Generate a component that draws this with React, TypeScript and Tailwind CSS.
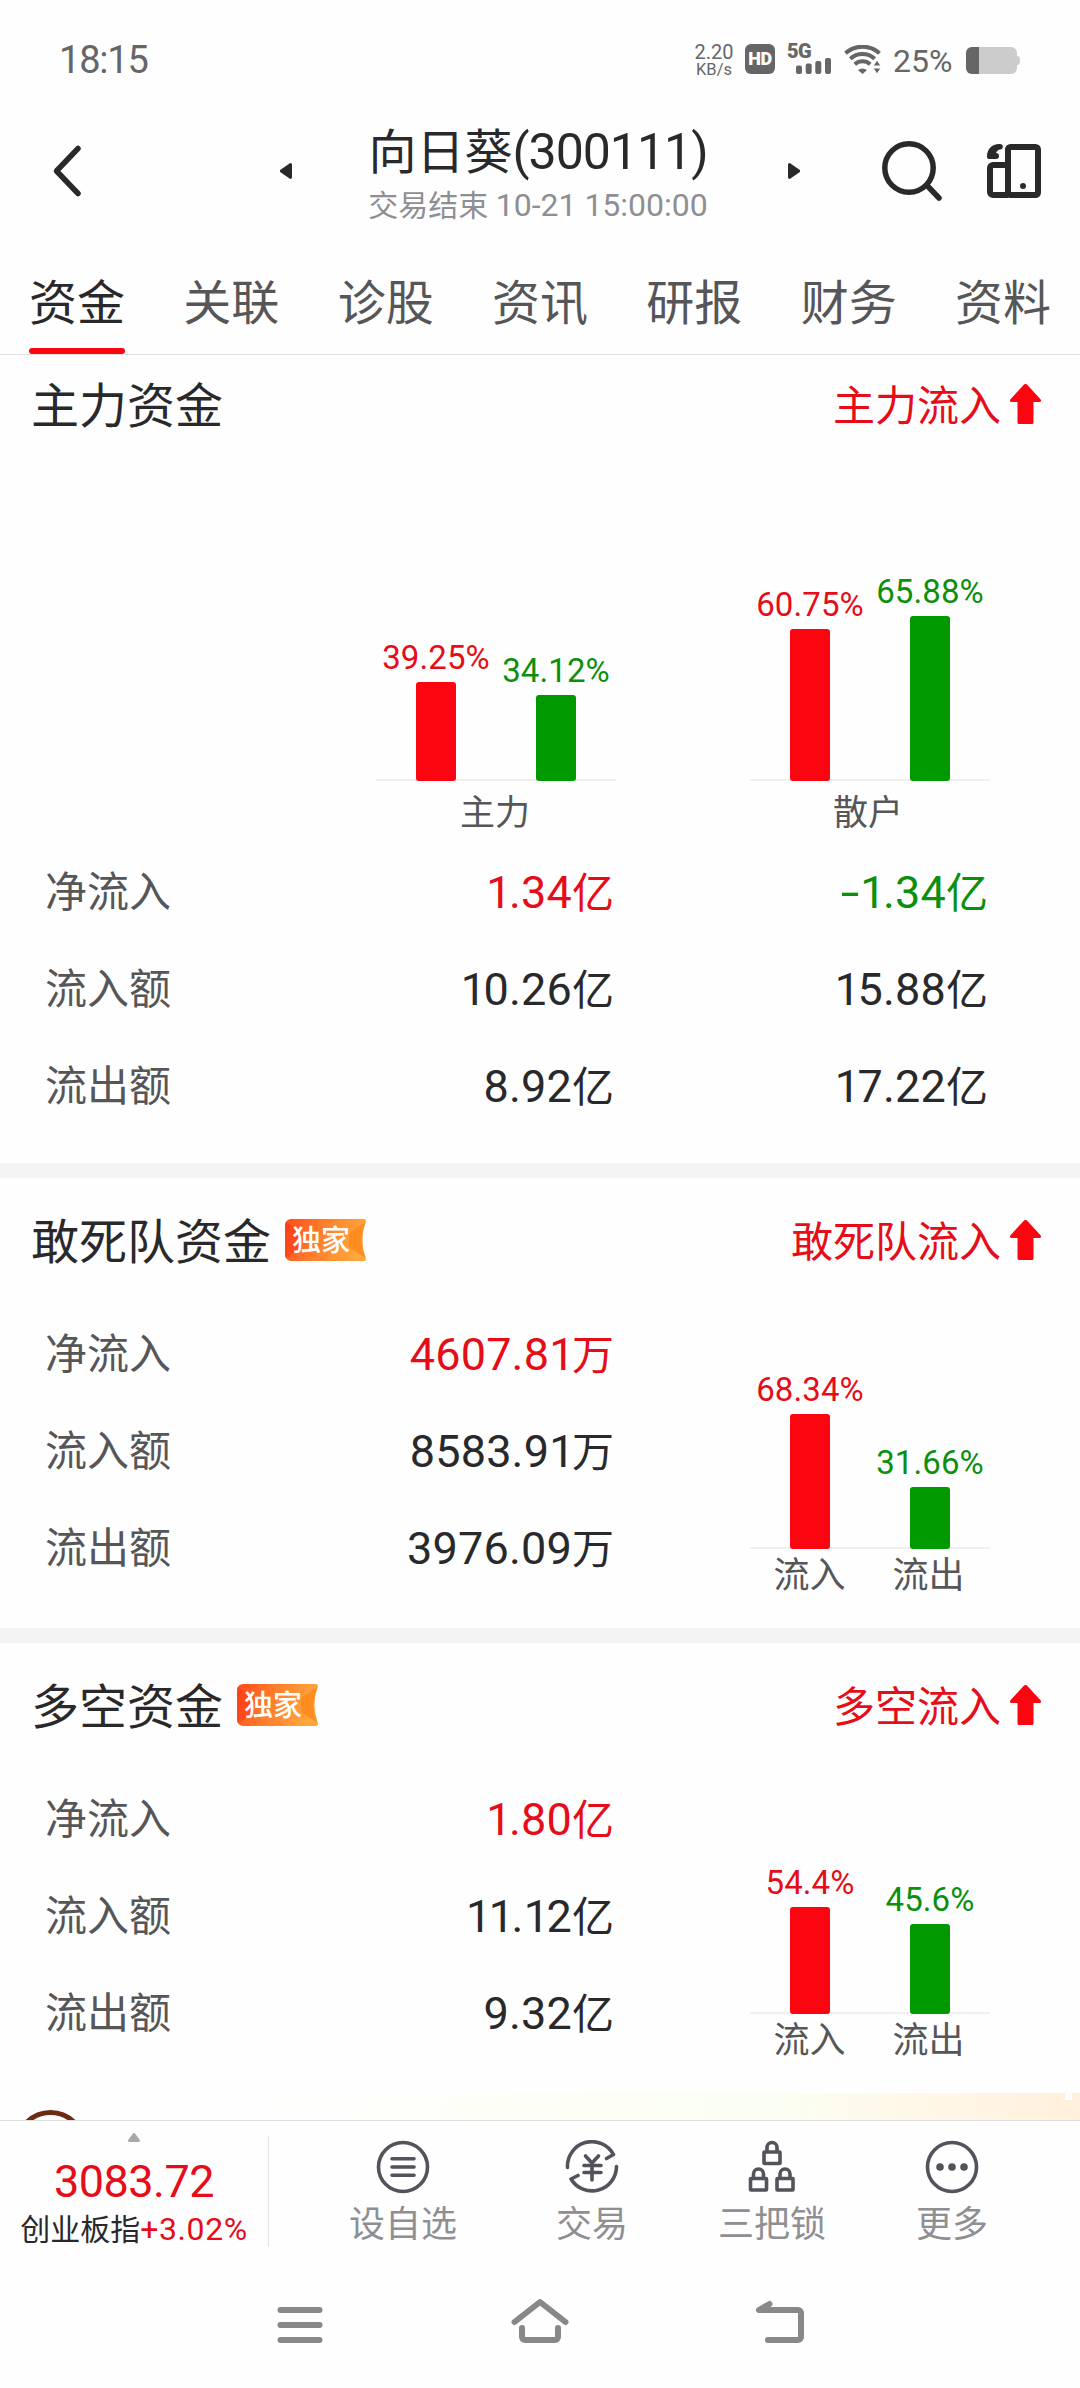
import { Fragment, type ReactNode } from "react"

const RED = "#e60c18"
const GREEN = "#0c900c"

interface BarData {
  pct: number
  text: string
  up: boolean
  label?: string
}

const tabs = ["资金", "关联", "诊股", "资讯", "研报", "财务", "资料"]

function StatusBar() {
  return (
    <div className="flex h-[110px] items-start pl-[59px] pr-[60px] text-[#666]">
      <span className="mt-[39px] text-[38px] leading-[42px] tracking-[-1.2px]">18:15</span>
      <div className="ml-auto flex items-start">
        <div className="mt-[43px] flex w-[38px] flex-col items-center whitespace-nowrap">
          <span className="text-[20px] leading-[18px]">2.20</span>
          <span className="mt-px text-[16.5px] leading-[16px]">KB/s</span>
        </div>
        <div className="ml-[12px] mt-[44px] flex h-[30px] w-[30px] items-center justify-center rounded-[6px] bg-[#666] text-[18px] font-black leading-none tracking-[-0.5px] text-white">
          HD
        </div>
        <div className="relative ml-[12px] mt-[44px] h-[30px] w-[44px]">
          <span className="absolute left-0 top-[-3px] text-[20px] font-black leading-[20px] tracking-[-0.5px]">5G</span>
          <svg width="44" height="30" viewBox="0 0 44 30" fill="#666">
            <rect x="9" y="21.5" width="6" height="8.5" rx="2" />
            <rect x="18.7" y="19.5" width="6" height="10.5" rx="2" />
            <rect x="28.3" y="17" width="6" height="13" rx="2" />
            <rect x="38" y="14" width="6" height="16" rx="2" />
          </svg>
        </div>
        <svg className="ml-[13px] mt-[45px]" width="37" height="29" viewBox="0 0 37 29" fill="none" stroke="#666">
          <path d="M1.500 8.300a25 25 0 0 1 34 0" strokeWidth="4" />
          <path d="M6.300 13.800a18 18 0 0 1 24.400 0" strokeWidth="4" />
          <path d="M10.800 19.200a11.500 11.500 0 0 1 15.400 0" strokeWidth="4" />
          <path d="M14 25q4.500-3 9 0l-4.500 4z" fill="#666" stroke="none" />
          <path d="M33 15l4 6h-8zM33 29l-4-6h8z" fill="#666" stroke="#fefefe" strokeWidth="1" />
        </svg>
        <span className="ml-[12px] mt-[44px] w-[66px] whitespace-nowrap text-[32px] leading-[34px]">25%</span>
        <svg className="ml-[7px] mt-[47px]" width="54" height="27" viewBox="0 0 54 27">
          <rect width="51" height="27" rx="6" fill="#ccc" />
          <path d="M50 9h1.500a2.500 4.500 0 0 1 0 9H50z" fill="#ccc" />
          <path d="M6 0h7v27H6a6 6 0 0 1-6-6V6a6 6 0 0 1 6-6z" fill="#666" />
        </svg>
      </div>
    </div>
  )
}

function Header() {
  return (
    <div className="flex h-[140px] items-start text-[#29292b]">
      <svg className="ml-[52px] mt-[34px]" width="32" height="54" viewBox="0 0 32 54" fill="none" stroke="currentColor" strokeWidth="5.500" strokeLinecap="round" strokeLinejoin="round">
        <path d="M26 4.500L4.500 27 26 49.500" />
      </svg>
      <svg className="ml-[196px] mt-[53px]" width="12" height="16" viewBox="0 0 12 16" fill="currentColor">
        <path d="M12 1.500v13a1.500 1.500 0 0 1-2.500 1L.5 9.200a1.500 1.500 0 0 1 0-2.400L9.500.5A1.500 1.500 0 0 1 12 1.500z" />
      </svg>
      <div className="flex w-[496px] flex-col items-center whitespace-nowrap pr-[4px]">
        <div className="mt-[12px] text-[48px] leading-[60px]">
          向日葵<span className="text-[50px] tracking-[-1px]">(300111)</span>
        </div>
        <div className="mt-[2px] text-[30px] leading-[40px] text-[#8f8f93]">
          交易结束 <span className="text-[32px]">10-21 15:00:00</span>
        </div>
      </div>
      <svg className="mt-[53px]" width="12" height="16" viewBox="0 0 12 16" fill="currentColor">
        <path d="M0 1.500v13a1.500 1.500 0 0 0 2.500 1l9-6.300a1.500 1.500 0 0 0 0-2.400L2.500.5A1.500 1.500 0 0 0 0 1.500z" />
      </svg>
      <svg className="ml-[80px] mt-[29px]" width="64" height="64" viewBox="0 0 64 64" fill="none" stroke="currentColor" strokeWidth="5.500" strokeLinecap="round">
        <circle cx="29" cy="29" r="24.200" />
        <path d="M47.500 47l11.500 12" />
      </svg>
      <svg className="ml-[43px] mt-[34px]" width="54" height="54" viewBox="0 0 54 54" fill="none" stroke="currentColor" strokeWidth="6">
        <rect x="21" y="3" width="30" height="48" rx="2.500" />
        <path d="M21 21H6a3 3 0 0 0-3 3v24a3 3 0 0 0 3 3h15" />
        <circle cx="36" cy="42" r="3" fill="currentColor" stroke="none" />
        <path d="M12 0h1a2.500 2.500 0 0 1 0 5.500C10.500 6 9.500 7.500 9 9a3 3 0 0 1 0 6H2a2 2 0 0 1-2-2.500C0 5 5 0 12 0z" fill="currentColor" stroke="none" />
      </svg>
    </div>
  )
}

function Tabs() {
  return (
    <div className="flex h-[105px] justify-between border-b border-[#e2e2e2] px-[29px] text-[48px] leading-[107px] text-[#565658]">
      {tabs.map((tab, i) => (
        <div key={tab} className={i === 0 ? "flex flex-col text-[#29292b]" : "flex flex-col"}>
          <span className="h-[98px]">{tab}</span>
          {i === 0 && <i className="h-[6px] rounded-full bg-[#fb0511]" />}
        </div>
      ))}
    </div>
  )
}

function Exclusive() {
  return (
    <div className="relative ml-[14px] mt-[-3px] h-[42px] w-[81px]">
      <svg className="absolute inset-0" width="81" height="42" viewBox="0 0 81 42">
        <defs>
          <linearGradient id="tag" x1="0" y1="0" x2="1" y2="0.200">
            <stop offset="0" stopColor="#ff4a1c" />
            <stop offset="0.500" stopColor="#ff7f2c" />
            <stop offset="1" stopColor="#ffa63c" />
          </linearGradient>
        </defs>
        <path d="M6 0h73q2.500 0 1.800 3Q74 21 80.800 39q.7 3-1.800 3H6a6 6 0 0 1-6-6V6a6 6 0 0 1 6-6z" fill="url(#tag)" />
        <path d="M80.500 3L64 14v14l16.500 11Q72.500 21 80.500 3z" fill="#ff8c20" />
        <path d="M1 3l15 10v16L1 39q-1-1-1-3V6q0-2 1-3z" fill="#ff3c14" opacity="0.600" />
      </svg>
      <span className="relative block pl-[7px] pt-px text-[29px] font-medium leading-[43px] text-white">独家</span>
    </div>
  )
}

function TitleRow({ title, flow, tag, first }: { title: string; flow: string; tag?: boolean; first?: boolean }) {
  return (
    <div className={first ? "flex h-[100px] items-center pl-[31px] pr-[39px]" : "flex h-[127px] items-center pl-[31px] pr-[39px]"}>
      <h2 className="pt-[3px] text-[48px] leading-[60px] text-[#29292b]">{title}</h2>
      {tag && <Exclusive />}
      <span className="ml-auto pt-[3px] text-[42px] leading-[60px] text-[#e60c18]">{flow}</span>
      <svg className="ml-[9px] mt-[-3px]" width="31" height="40" viewBox="0 0 31 40" fill="#fb0511">
        <path d="M13.800.8a2.400 2.400 0 0 1 3.400 0l13.300 14.400q1.500 2.300-1.200 2.800H23.500v20.500q0 1.500-1.500 1.500H9q-1.500 0-1.500-1.500V18H1.700q-2.700-.5-1.200-2.800z" />
      </svg>
    </div>
  )
}

// tightens the "1" and widens the minus sign
function Digits({ value }: { value: string }) {
  return (
    <span className="text-[45px] tracking-[0.2px]">
      {value.split(/([1-])/).map((part, i) => {
        if (part === "-") return <span key={i} className="mr-px inline-block origin-right scale-x-150">-</span>
        if (part === "1") return <span key={i} className="tracking-[-2.500px]">1</span>
        return part
      })}
    </span>
  )
}

function Amount({ value, color }: { value: string; color?: string }) {
  return (
    <span
      className="h-[97px] whitespace-nowrap pr-px text-right text-[42px] leading-[97px]"
      style={{ color: color ?? "#29292b" }}
    >
      <Digits value={value.slice(0, -1)} />
      {value.slice(-1)}
    </span>
  )
}

function Bars({ data, scale }: { data: BarData[]; scale: number }) {
  return (
    <div className="flex w-[240px] items-end justify-around bg-[linear-gradient(#f0f0f0,#f0f0f0)] bg-[length:100%_2px] bg-bottom bg-no-repeat">
      {data.map((bar) => (
        <div key={bar.text} className="flex w-[120px] flex-col items-center">
          <span className="mb-[7px] text-[33px] leading-[34px] tracking-[0.1px]" style={{ color: bar.up ? RED : GREEN }}>
            {bar.text}
          </span>
          <div
            className="w-[40px] rounded-[3px]"
            style={{ height: bar.pct * scale, backgroundColor: bar.up ? "#fb0511" : "#009900" }}
          />
        </div>
      ))}
    </div>
  )
}

function FlowSection({ title, flow, amounts, bars }: { title: string; flow: string; amounts: string[]; bars: BarData[] }) {
  const labels = ["净流入", "流入额", "流出额"]
  return (
    <section>
      <TitleRow title={title} flow={flow} tag />
      <div className="flex h-[323px] pl-[45px]">
        <div className="w-[570px] pt-px">
          {labels.map((label, i) => (
            <div key={label} className="flex h-[97px] justify-between text-[42px] leading-[97px] text-[#565658]">
              <span>{label}</span>
              <Amount value={amounts[i]} color={i === 0 ? RED : undefined} />
            </div>
          ))}
        </div>
        <div className="ml-[135px] w-[240px]">
          <div className="flex h-[244px] items-stretch">
            <Bars data={bars} scale={1.97} />
          </div>
          <div className="flex pt-[2px] text-[36px] leading-[50px] text-[#565658]">
            {bars.map((bar) => (
              <span key={bar.label} className="w-[119px] text-center">{bar.label}</span>
            ))}
          </div>
        </div>
      </div>
    </section>
  )
}

function MainSection() {
  const rows = [
    ["净流入", "1.34亿", "-1.34亿"],
    ["流入额", "10.26亿", "15.88亿"],
    ["流出额", "8.92亿", "17.22亿"],
  ]
  return (
    <section className="h-[808px]">
      <TitleRow title="主力资金" flow="主力流入" first />
      <div className="flex h-[326px] gap-[134px] pl-[376px]">
        <Bars scale={2.51} data={[{ pct: 39.25, text: "39.25%", up: true }, { pct: 34.12, text: "34.12%", up: false }]} />
        <Bars scale={2.51} data={[{ pct: 60.75, text: "60.75%", up: true }, { pct: 65.88, text: "65.88%", up: false }]} />
      </div>
      <div className="flex h-[62px] gap-[134px] pl-[376px] text-center text-[35px] leading-[66px] text-[#565658]">
        <span className="w-[238px]">主力</span>
        <span className="w-[240px]">散户</span>
      </div>
      <div className="grid grid-cols-[330px_240px_374px] pl-[45px] pt-px text-[42px] leading-[97px] text-[#565658]">
        {rows.map(([label, main, retail], i) => (
          <Fragment key={label}>
            <span className="h-[97px]">{label}</span>
            <Amount value={main} color={i === 0 ? RED : undefined} />
            <Amount value={retail} color={i === 0 ? GREEN : undefined} />
          </Fragment>
        ))}
      </div>
    </section>
  )
}

function Action({ label, className, children }: { label: string; className: string; children: ReactNode }) {
  return (
    <div className={className}>
      <svg className="mt-[19px]" width="54" height="54" viewBox="0 0 54 54" fill="none" stroke="#52535b" strokeWidth="3.600" strokeLinecap="round" strokeLinejoin="round">
        {children}
      </svg>
      <span className="mt-[6px] text-[36px] leading-[50px] text-[#8f8f93]">{label}</span>
    </div>
  )
}

function Lock({ x, y }: { x: number; y: number }) {
  return (
    <g transform={`translate(${x} ${y})`}>
      <rect x="2" y="11.500" width="16" height="11.500" rx="0.500" />
      <path d="M5 11V7a5 5 0 0 1 10 0v4" />
    </g>
  )
}

function BottomBar() {
  return (
    <div className="flex h-[140px] border-t border-[#dedede]">
      <div className="flex w-[268px] flex-col items-center pt-[12px]">
        <svg width="12" height="9" viewBox="0 0 12 9" fill="#a9a9ab">
          <path d="M4.800.8q1.200-1.500 2.400 0l4.500 6q.9 2.200-1.200 2.200h-9q-2.100 0-1.200-2.200z" />
        </svg>
        <span className="mt-[14px] text-[45px] leading-[52px] tracking-[-0.5px] text-[#e60c18]">3083.72</span>
        <span className="mt-px whitespace-nowrap text-[30px] leading-[40px] text-[#29292b]">
          创业板指<span className="text-[32px] tracking-[0.6px] text-[#e60c18]">+3.02%</span>
        </span>
      </div>
      <div className="mt-[15px] h-[111px] w-px bg-[#e2e2e2]" />
      <Action label="设自选" className="ml-[60px] flex w-[148px] flex-col items-center">
        <circle cx="27" cy="27" r="24.500" />
        <path d="M16 18.700h22M16 27h22M16 35.200h22" />
      </Action>
      <Action label="交易" className="ml-[51px] flex w-[128px] flex-col items-center">
        <path d="M2.500 27.500A24.500 24.500 0 0 1 48.500 14.500L41.500 18.500" />
        <path d="M51.500 26.500A24.500 24.500 0 0 1 6 39L13 35.500" />
        <path d="M20.500 16L27 23l6.500-7M27 23v17M19 25.500h17M19 32.500h17" />
      </Action>
      <Action label="三把锁" className="ml-[42px] flex w-[148px] flex-col items-center">
        <Lock x={17} y={0.5} />
        <Lock x={3.5} y={27} />
        <Lock x={30} y={27} />
      </Action>
      <Action label="更多" className="ml-[42px] flex w-[128px] flex-col items-center">
        <circle cx="27" cy="27" r="24.500" />
        <g fill="#52535b" stroke="none">
          <circle cx="15" cy="27" r="3.800" />
          <circle cx="27" cy="27" r="3.800" />
          <circle cx="39" cy="27" r="3.800" />
        </g>
      </Action>
    </div>
  )
}

function NavBar() {
  return (
    <div className="flex h-[128px] items-start pt-[34px]">
      <svg className="ml-[270px]" width="60" height="60" viewBox="0 0 60 60" fill="none" stroke="#888" strokeWidth="6" strokeLinecap="round">
        <path d="M10.500 16h39M10.500 31h39M10.500 46h39" />
      </svg>
      <svg className="ml-[180px]" width="60" height="60" viewBox="0 0 60 60" fill="none" stroke="#888" strokeWidth="6" strokeLinecap="round" strokeLinejoin="round">
        <path d="M4.500 28L30 8l25.500 20" />
        <path d="M12 34v9a3 3 0 0 0 3 3h30a3 3 0 0 0 3-3v-9" />
      </svg>
      <svg className="ml-[180px]" width="60" height="60" viewBox="0 0 60 60" fill="none" stroke="#888" strokeWidth="6" strokeLinecap="round" strokeLinejoin="round">
        <path d="M19.500 10L9 16h39a3 3 0 0 1 3 3v24a3 3 0 0 1-3 3H18" />
      </svg>
    </div>
  )
}

export default function App() {
  return (
    <div className="h-[2388px] w-[1080px] overflow-hidden bg-[#fefefe] font-['Roboto','Noto_Sans_CJK_SC',sans-serif]">
      <StatusBar />
      <Header />
      <Tabs />
      <MainSection />
      <div className="h-[15px] bg-[#f4f4f4]" />
      <FlowSection
        title="敢死队资金"
        flow="敢死队流入"
        amounts={["4607.81万", "8583.91万", "3976.09万"]}
        bars={[
          { pct: 68.34, text: "68.34%", up: true, label: "流入" },
          { pct: 31.66, text: "31.66%", up: false, label: "流出" },
        ]}
      />
      <div className="h-[15px] bg-[#f4f4f4]" />
      <FlowSection
        title="多空资金"
        flow="多空流入"
        amounts={["1.80亿", "11.12亿", "9.32亿"]}
        bars={[
          { pct: 54.4, text: "54.4%", up: true, label: "流入" },
          { pct: 45.6, text: "45.6%", up: false, label: "流出" },
        ]}
      />
      <div className="flex h-[27px] justify-between bg-[linear-gradient(100deg,#fefefe_25%,#fdfff6_45%,#fbfef2_72%,#fff8e8_84%,#fff0dc)]">
        <svg width="90" height="27" viewBox="0 0 90 27" fill="none" stroke="#6d2b12" strokeWidth="5">
          <circle cx="50.500" cy="53" r="33.500" />
        </svg>
        <i className="mr-[8px] h-[7px] w-[7px] bg-[#fefefe]" />
      </div>
      <BottomBar />
      <NavBar />
    </div>
  )
}
